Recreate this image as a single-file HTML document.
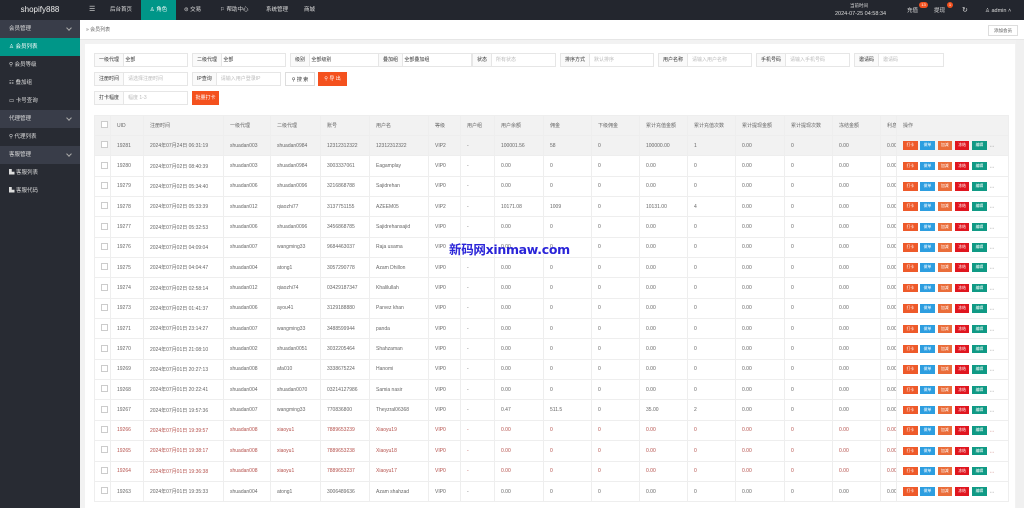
<!DOCTYPE html>
<html><head><meta charset="utf-8"><style>
*{margin:0;padding:0;box-sizing:border-box}
body{width:1024px;height:508px;overflow:hidden;background:#f2f2f2;font-family:"Liberation Sans","Noto Sans CJK SC",sans-serif;font-size:5.5px;color:#666;position:relative}
.top{position:absolute;left:0;top:0;width:1024px;height:20px;background:#23262e;color:#ddd}
.logo{position:absolute;left:0;top:0;width:80px;height:20px;line-height:20px;text-align:center;font-size:8px;color:#eee}
.nav{position:absolute;top:0;height:20px;line-height:20px;font-size:5.5px;color:#ddd}
.side{position:absolute;left:0;top:20px;width:80px;height:488px;background:#282b33}
.side div{height:18px;line-height:18px;padding-left:9px;color:#ddd;font-size:5.5px;position:relative}
.side .h{background:#393d49;}
.side .h:after{content:"";position:absolute;right:9px;top:6px;width:3px;height:3px;border-right:1px solid #aaa;border-bottom:1px solid #aaa;transform:rotate(45deg)}
.side .a{background:#009688;color:#fff}
.bc{position:absolute;left:80px;top:20px;width:944px;height:20px;background:#fff;border-bottom:1px solid #e6e6e6}
.card{position:absolute;left:85px;top:44px;width:930px;height:464px;background:#fff}
.f{position:absolute;height:14px;border:1px solid #e6e6e6;background:#fff;font-size:5px;line-height:12px;color:#333}
.f .l{display:inline-block;padding:0 4px;border-right:1px solid #e6e6e6;height:12px;background:#fafafa}
.f .p{color:#bbb;padding-left:4px}
.btn{position:absolute;height:14px;line-height:14px;text-align:center;font-size:5px}
table{position:absolute;left:94px;top:115px;border-collapse:collapse;table-layout:fixed;width:914px}
td,th{height:20.35px;border:1px solid #eee;font-weight:normal;text-align:left;padding-left:6px;white-space:nowrap;overflow:hidden;font-size:5px;color:#666}
th{height:20px;background:#f2f2f2;color:#666}
tr:nth-child(2) td{background:#f2f2f2}
tr.r td{color:#b5504b}
.cb{display:inline-block;width:7px;height:7px;border:1px solid #ccc;background:#fff}
.op span{display:inline-block;width:14.5px;height:8.5px;margin-right:2.8px;vertical-align:middle;color:#fff;font-size:3.8px;line-height:8.5px;text-align:center}
.o1{background:#ee5a2a}.o2{background:#2d9ee0}.o3{background:#ea6d3a}.o4{background:#e0161f}.o5{background:#109a85}
.sb{position:absolute;right:0;top:40px;width:8px;height:468px;background:#f0f0f0}
.wm{position:absolute;left:449px;top:239px;font-size:12.5px;font-weight:bold;color:#2a24d8;font-family:"DejaVu Sans","Noto Sans CJK SC",sans-serif;letter-spacing:-0.3px}
.badge{position:absolute;top:2px;height:6px;border-radius:3px;background:#f4511e;color:#fff;font-size:4px;line-height:6px;text-align:center}
</style></head><body>
<div class="top">
<div class="logo">shopify888</div>
<div class="nav" style="left:89px;font-size:7px">☰</div>
<div class="nav" style="left:110px">后台首页</div>
<div class="nav" style="left:141px;width:35px;background:#009688;color:#fff;text-align:center">♙ 角色</div>
<div class="nav" style="left:184px">⊜ 交易</div>
<div class="nav" style="left:220px">⚐ 帮助中心</div>
<div class="nav" style="left:266px">系统管理</div>
<div class="nav" style="left:304px">商城</div>
<div class="nav" style="left:850px;top:-4px;font-size:4.5px">当前时间</div>
<div class="nav" style="left:835px;top:4px;font-size:5.5px">2024-07-25 04:58:34</div>
<div class="nav" style="left:907px;top:1px">充值</div><div class="badge" style="left:919px;width:9px">13</div>
<div class="nav" style="left:934px;top:1px">提现</div><div class="badge" style="left:947px;width:6px">1</div>
<div class="nav" style="left:962px;top:1px;font-size:7px">↻</div>
<div class="nav" style="left:985px;top:1px">♙ admin ˄</div>
</div>
<div class="side">
<div class="h">会员管理</div><div class="a">♙ 会员列表</div><div>⚲ 会员等级</div><div>☷ 叠加组</div><div>▭ 卡号查询</div>
<div class="h">代理管理</div><div>⚲ 代理列表</div><div class="h">客服管理</div><div>▙ 客服列表</div><div>▙ 客服代码</div>
</div>
<div class="bc"><span style="position:absolute;left:6px;top:6px;font-size:5px;color:#666">» 会员列表</span>
<span style="position:absolute;left:908px;top:5px;width:30px;height:11px;border:1px solid #ddd;font-size:4.5px;line-height:9px;text-align:center;color:#555">添加会员</span></div>
<div class="card"></div>
<div class="f" style="left:94px;top:53px;width:94px"><span class="l">一级代理</span> 全部</div>
<div class="f" style="left:192px;top:53px;width:94px"><span class="l">二级代理</span> 全部</div>
<div class="f" style="left:290px;top:53px;width:94px"><span class="l">级别</span> 全部级别</div>
<div class="f" style="left:378px;top:53px;width:94px"><span class="l">叠加组</span> 全部叠加组</div>
<div class="f" style="left:472px;top:53px;width:84px"><span class="l">状态</span><span class="p">所有状态</span></div>
<div class="f" style="left:560px;top:53px;width:94px"><span class="l">排序方式</span><span class="p">默认排序</span></div>
<div class="f" style="left:658px;top:53px;width:94px"><span class="l">用户名称</span><span class="p">请输入用户名称</span></div>
<div class="f" style="left:756px;top:53px;width:94px"><span class="l">手机号码</span><span class="p">请输入手机号码</span></div>
<div class="f" style="left:854px;top:53px;width:90px"><span class="l">邀请码</span><span class="p">邀请码</span></div>
<div class="f" style="left:94px;top:72px;width:94px"><span class="l">注册时间</span><span class="p">请选择注册时间</span></div>
<div class="f" style="left:192px;top:72px;width:89px"><span class="l">IP查询</span><span class="p">请输入用户登录IP</span></div>
<div class="btn" style="left:285px;top:72px;width:30px;border:1px solid #ddd;color:#333">⚲ 搜 索</div>
<div class="btn" style="left:318px;top:72px;width:29px;background:#f4511e;color:#fff">⚲ 导 出</div>
<div class="f" style="left:94px;top:91px;width:94px"><span class="l">打卡幅度</span><span class="p">幅度 1-3</span></div>
<div class="btn" style="left:192px;top:91px;width:27px;background:#f4511e;color:#fff">批量打卡</div>
<table>
<colgroup><col style="width:16px"><col style="width:33px"><col style="width:80px"><col style="width:47px"><col style="width:50px"><col style="width:49px"><col style="width:59px"><col style="width:32px"><col style="width:34px"><col style="width:49px"><col style="width:48px"><col style="width:48px"><col style="width:48px"><col style="width:48px"><col style="width:49px"><col style="width:48px"><col style="width:48px"><col style="width:16px"><col style="width:112px"></colgroup>
<tr><th><span class="cb"></span></th><th>UID</th><th>注册时间</th><th>一级代理</th><th>二级代理</th><th>账号</th><th>用户名</th><th>等级</th><th>用户组</th><th>用户余额</th><th>佣金</th><th>下级佣金</th><th>累计充值金额</th><th>累计充值次数</th><th>累计提现金额</th><th>累计提现次数</th><th>冻结金额</th><th>利息</th><th>操作</th></tr>
<tr><td><span class="cb"></span></td><td>19281</td><td>2024年07月24日 06:31:19</td><td>shuadan003</td><td>shuadan0984</td><td>12312312322</td><td>12312312322</td><td>VIP2</td><td>-</td><td>100001.56</td><td>58</td><td>0</td><td>100000.00</td><td>1</td><td>0.00</td><td>0</td><td>0.00</td><td>0.00</td><td class="op"><span class="o1">打卡</span><span class="o2">做单</span><span class="o3">加减</span><span class="o4">冻结</span><span class="o5">编辑</span>…</td></tr>
<tr><td><span class="cb"></span></td><td>19280</td><td>2024年07月02日 08:40:39</td><td>shuadan003</td><td>shuadan0984</td><td>3003337061</td><td>Eagamplay</td><td>VIP0</td><td>-</td><td>0.00</td><td>0</td><td>0</td><td>0.00</td><td>0</td><td>0.00</td><td>0</td><td>0.00</td><td>0.00</td><td class="op"><span class="o1">打卡</span><span class="o2">做单</span><span class="o3">加减</span><span class="o4">冻结</span><span class="o5">编辑</span>…</td></tr>
<tr><td><span class="cb"></span></td><td>19279</td><td>2024年07月02日 05:34:40</td><td>shuadan006</td><td>shuadan0096</td><td>3216868788</td><td>Sajidrehan</td><td>VIP0</td><td>-</td><td>0.00</td><td>0</td><td>0</td><td>0.00</td><td>0</td><td>0.00</td><td>0</td><td>0.00</td><td>0.00</td><td class="op"><span class="o1">打卡</span><span class="o2">做单</span><span class="o3">加减</span><span class="o4">冻结</span><span class="o5">编辑</span>…</td></tr>
<tr><td><span class="cb"></span></td><td>19278</td><td>2024年07月02日 05:33:39</td><td>shuadan012</td><td>qiaozhi77</td><td>3137751155</td><td>AZEEM05</td><td>VIP2</td><td>-</td><td>10171.08</td><td>1009</td><td>0</td><td>10131.00</td><td>4</td><td>0.00</td><td>0</td><td>0.00</td><td>0.00</td><td class="op"><span class="o1">打卡</span><span class="o2">做单</span><span class="o3">加减</span><span class="o4">冻结</span><span class="o5">编辑</span>…</td></tr>
<tr><td><span class="cb"></span></td><td>19277</td><td>2024年07月02日 05:32:53</td><td>shuadan006</td><td>shuadan0096</td><td>3456868785</td><td>Sajidrehansajid</td><td>VIP0</td><td>-</td><td>0.00</td><td>0</td><td>0</td><td>0.00</td><td>0</td><td>0.00</td><td>0</td><td>0.00</td><td>0.00</td><td class="op"><span class="o1">打卡</span><span class="o2">做单</span><span class="o3">加减</span><span class="o4">冻结</span><span class="o5">编辑</span>…</td></tr>
<tr><td><span class="cb"></span></td><td>19276</td><td>2024年07月02日 04:09:04</td><td>shuadan007</td><td>wangming33</td><td>9684463037</td><td>Raja usama</td><td>VIP0</td><td>-</td><td>0.00</td><td>0</td><td>0</td><td>0.00</td><td>0</td><td>0.00</td><td>0</td><td>0.00</td><td>0.00</td><td class="op"><span class="o1">打卡</span><span class="o2">做单</span><span class="o3">加减</span><span class="o4">冻结</span><span class="o5">编辑</span>…</td></tr>
<tr><td><span class="cb"></span></td><td>19275</td><td>2024年07月02日 04:04:47</td><td>shuadan004</td><td>atong1</td><td>3057290778</td><td>Azam Dhillon</td><td>VIP0</td><td>-</td><td>0.00</td><td>0</td><td>0</td><td>0.00</td><td>0</td><td>0.00</td><td>0</td><td>0.00</td><td>0.00</td><td class="op"><span class="o1">打卡</span><span class="o2">做单</span><span class="o3">加减</span><span class="o4">冻结</span><span class="o5">编辑</span>…</td></tr>
<tr><td><span class="cb"></span></td><td>19274</td><td>2024年07月02日 02:58:14</td><td>shuadan012</td><td>qiaozhi74</td><td>03429187347</td><td>Khalilullah</td><td>VIP0</td><td>-</td><td>0.00</td><td>0</td><td>0</td><td>0.00</td><td>0</td><td>0.00</td><td>0</td><td>0.00</td><td>0.00</td><td class="op"><span class="o1">打卡</span><span class="o2">做单</span><span class="o3">加减</span><span class="o4">冻结</span><span class="o5">编辑</span>…</td></tr>
<tr><td><span class="cb"></span></td><td>19273</td><td>2024年07月02日 01:41:37</td><td>shuadan006</td><td>ayou41</td><td>3129188880</td><td>Parvez khan</td><td>VIP0</td><td>-</td><td>0.00</td><td>0</td><td>0</td><td>0.00</td><td>0</td><td>0.00</td><td>0</td><td>0.00</td><td>0.00</td><td class="op"><span class="o1">打卡</span><span class="o2">做单</span><span class="o3">加减</span><span class="o4">冻结</span><span class="o5">编辑</span>…</td></tr>
<tr><td><span class="cb"></span></td><td>19271</td><td>2024年07月01日 23:14:27</td><td>shuadan007</td><td>wangming33</td><td>3488599944</td><td>panda</td><td>VIP0</td><td>-</td><td>0.00</td><td>0</td><td>0</td><td>0.00</td><td>0</td><td>0.00</td><td>0</td><td>0.00</td><td>0.00</td><td class="op"><span class="o1">打卡</span><span class="o2">做单</span><span class="o3">加减</span><span class="o4">冻结</span><span class="o5">编辑</span>…</td></tr>
<tr><td><span class="cb"></span></td><td>19270</td><td>2024年07月01日 21:08:10</td><td>shuadan002</td><td>shuadan0051</td><td>3032205464</td><td>Shahzaman</td><td>VIP0</td><td>-</td><td>0.00</td><td>0</td><td>0</td><td>0.00</td><td>0</td><td>0.00</td><td>0</td><td>0.00</td><td>0.00</td><td class="op"><span class="o1">打卡</span><span class="o2">做单</span><span class="o3">加减</span><span class="o4">冻结</span><span class="o5">编辑</span>…</td></tr>
<tr><td><span class="cb"></span></td><td>19269</td><td>2024年07月01日 20:27:13</td><td>shuadan008</td><td>afa010</td><td>3338675224</td><td>Hanomi</td><td>VIP0</td><td>-</td><td>0.00</td><td>0</td><td>0</td><td>0.00</td><td>0</td><td>0.00</td><td>0</td><td>0.00</td><td>0.00</td><td class="op"><span class="o1">打卡</span><span class="o2">做单</span><span class="o3">加减</span><span class="o4">冻结</span><span class="o5">编辑</span>…</td></tr>
<tr><td><span class="cb"></span></td><td>19268</td><td>2024年07月01日 20:22:41</td><td>shuadan004</td><td>shuadan0070</td><td>03214127986</td><td>Samia nasir</td><td>VIP0</td><td>-</td><td>0.00</td><td>0</td><td>0</td><td>0.00</td><td>0</td><td>0.00</td><td>0</td><td>0.00</td><td>0.00</td><td class="op"><span class="o1">打卡</span><span class="o2">做单</span><span class="o3">加减</span><span class="o4">冻结</span><span class="o5">编辑</span>…</td></tr>
<tr><td><span class="cb"></span></td><td>19267</td><td>2024年07月01日 19:57:36</td><td>shuadan007</td><td>wangming33</td><td>770836800</td><td>Theyzral06368</td><td>VIP0</td><td>-</td><td>0.47</td><td>511.5</td><td>0</td><td>35.00</td><td>2</td><td>0.00</td><td>0</td><td>0.00</td><td>0.00</td><td class="op"><span class="o1">打卡</span><span class="o2">做单</span><span class="o3">加减</span><span class="o4">冻结</span><span class="o5">编辑</span>…</td></tr>
<tr class="r"><td><span class="cb"></span></td><td>19266</td><td>2024年07月01日 19:39:57</td><td>shuadan008</td><td>xiaoyu1</td><td>7889653239</td><td>Xiaoyu19</td><td>VIP0</td><td>-</td><td>0.00</td><td>0</td><td>0</td><td>0.00</td><td>0</td><td>0.00</td><td>0</td><td>0.00</td><td>0.00</td><td class="op"><span class="o1">打卡</span><span class="o2">做单</span><span class="o3">加减</span><span class="o4">冻结</span><span class="o5">编辑</span>…</td></tr>
<tr class="r"><td><span class="cb"></span></td><td>19265</td><td>2024年07月01日 19:38:17</td><td>shuadan008</td><td>xiaoyu1</td><td>7889653238</td><td>Xiaoyu18</td><td>VIP0</td><td>-</td><td>0.00</td><td>0</td><td>0</td><td>0.00</td><td>0</td><td>0.00</td><td>0</td><td>0.00</td><td>0.00</td><td class="op"><span class="o1">打卡</span><span class="o2">做单</span><span class="o3">加减</span><span class="o4">冻结</span><span class="o5">编辑</span>…</td></tr>
<tr class="r"><td><span class="cb"></span></td><td>19264</td><td>2024年07月01日 19:36:38</td><td>shuadan008</td><td>xiaoyu1</td><td>7889653237</td><td>Xiaoyu17</td><td>VIP0</td><td>-</td><td>0.00</td><td>0</td><td>0</td><td>0.00</td><td>0</td><td>0.00</td><td>0</td><td>0.00</td><td>0.00</td><td class="op"><span class="o1">打卡</span><span class="o2">做单</span><span class="o3">加减</span><span class="o4">冻结</span><span class="o5">编辑</span>…</td></tr>
<tr><td><span class="cb"></span></td><td>19263</td><td>2024年07月01日 19:35:33</td><td>shuadan004</td><td>atong1</td><td>3006489636</td><td>Azam shahzad</td><td>VIP0</td><td>-</td><td>0.00</td><td>0</td><td>0</td><td>0.00</td><td>0</td><td>0.00</td><td>0</td><td>0.00</td><td>0.00</td><td class="op"><span class="o1">打卡</span><span class="o2">做单</span><span class="o3">加减</span><span class="o4">冻结</span><span class="o5">编辑</span>…</td></tr>
</table>
<div class="wm">新码网xinmaw.com</div>
<div class="sb"></div>
</body></html>
